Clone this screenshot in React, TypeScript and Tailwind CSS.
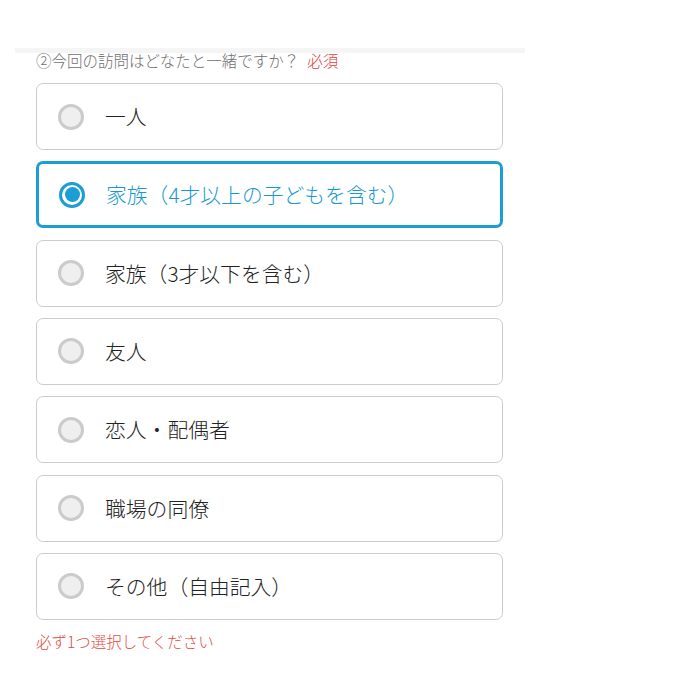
const options = [
  "一人",
  "家族（4才以上の子どもを含む）",
  "家族（3才以下を含む）",
  "友人",
  "恋人・配偶者",
  "職場の同僚",
  "その他（自由記入）",
];

const Radio = ({ checked }: { checked: boolean }) =>
  checked ? (
    <span className="flex h-[26px] w-[26px] shrink-0 items-center justify-center rounded-full border-[3px] border-[#1b9ed3] bg-white">
      <span className="h-[15px] w-[15px] rounded-full bg-[#1b9ed3]" />
    </span>
  ) : (
    <span className="h-[26px] w-[26px] shrink-0 rounded-full border-[3px] border-[#cbcbcb] bg-[#efefef]" />
  );

export default function App() {
  const selected = 1;

  return (
    <div
      className="min-h-[700px] w-[700px] bg-white pt-[48px] font-light"
      style={{ fontFamily: '"Noto Sans CJK JP", "Noto Sans", sans-serif' }}
    >
      <div className="ml-[15px] w-[510px]">
        <div className="relative z-10 h-[5px] bg-[#f5f5f5]" />
        <div className="-mt-[4px] h-[22px] overflow-hidden pl-[21px] text-[15.5px] leading-[22px] text-[#6e6e6e]">
          ②今回の訪問はどなたと一緒ですか？
          <span className="ml-[8px] text-[#e0443b]">必須</span>
        </div>

        <div className="mt-[12px] flex w-[488px] flex-col gap-[11.33px] pl-[21px]">
          {options.map((label, index) => {
            const checked = index === selected;
            return (
              <label
                key={index}
                className={
                  checked
                    ? "flex h-[67px] items-center gap-[21px] rounded-[7px] border-[3px] border-[#1b9ed3] pl-[20px]"
                    : "flex h-[67px] items-center gap-[21px] rounded-[7px] border-[1.5px] border-[#cccccc] pl-[21px]"
                }
              >
                <Radio checked={checked} />
                <span
                  className={
                    checked
                      ? "text-[20.8px] leading-none text-[#1799cf]"
                      : "text-[20.8px] leading-none text-[#222222]"
                  }
                >
                  {label}
                </span>
              </label>
            );
          })}
        </div>

        <p className="mt-[11px] pl-[21px] text-[15.5px] leading-[20px] text-[#e04a40]">
          必ず1つ選択してください
        </p>
      </div>
    </div>
  );
}
